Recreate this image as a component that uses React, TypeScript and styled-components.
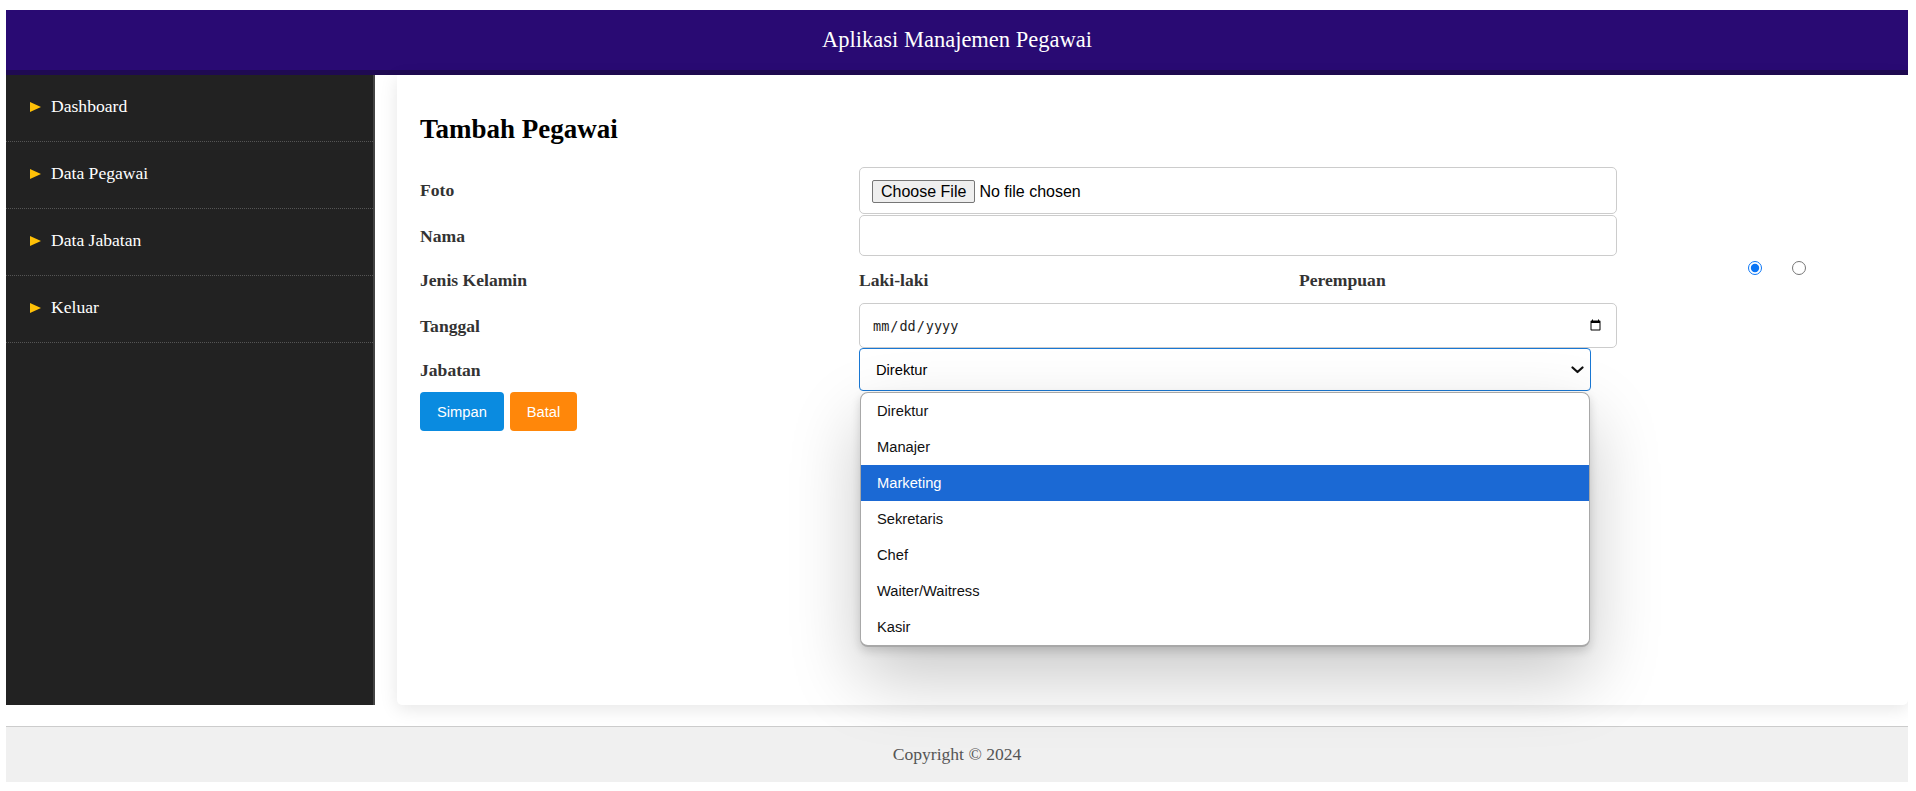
import styled, { createGlobalStyle } from "styled-components";

const serif = `"Liberation Serif", "Times New Roman", serif`;
const sans = `"Liberation Sans", Arial, sans-serif`;

const GlobalStyle = createGlobalStyle`
  body {
    margin: 10px 8px 0 6px;
    background: #fff;
    font-family: ${serif};
  }
`;

const menu = ["Dashboard", "Data Pegawai", "Data Jabatan", "Keluar"];
const jabatan = [
  "Direktur",
  "Manajer",
  "Marketing",
  "Sekretaris",
  "Chef",
  "Waiter/Waitress",
  "Kasir",
];

export default function App() {
  return (
    <>
      <GlobalStyle />
      <Header>Aplikasi Manajemen Pegawai</Header>
      <Body>
        <Sidebar>
          {menu.map((m) => (
            <NavItem key={m}>
              <svg width="11" height="10" viewBox="0 0 11 10">
                <polygon points="0,0 11,5 0,10" fill="#ffc107" />
              </svg>
              {m}
            </NavItem>
          ))}
        </Sidebar>

        <Card>
          <Title>Tambah Pegawai</Title>
          <Form>
            <Row $h={46} $mb={2}>
              <Label $shift={-1}>Foto</Label>
              <FileInput type="file" />
            </Row>
            <Row $h={41}>
              <Label>Nama</Label>
              <TextInput type="text" />
            </Row>
            <Row $h={47}>
              <Label>Jenis Kelamin</Label>
              <GenderGroup>
                <GenderLabel>Laki-laki</GenderLabel>
                <GenderLabel>Perempuan</GenderLabel>
                <RadioSet>
                  <Radio type="radio" name="jk" defaultChecked />
                  <Radio type="radio" name="jk" />
                </RadioSet>
              </GenderGroup>
            </Row>
            <Row $h={45}>
              <Label>Tanggal</Label>
              <DateInput type="date" />
            </Row>
            <Row $h={43}>
              <Label>Jabatan</Label>
              <SelectWrap>
                <Select defaultValue="Direktur">
                  {jabatan.map((j) => (
                    <option key={j}>{j}</option>
                  ))}
                </Select>
                <Chevron width="13" height="8" viewBox="0 0 13 8">
                  <path
                    d="M1.5 1.5 L6.5 6 L11.5 1.5"
                    fill="none"
                    stroke="#111"
                    strokeWidth="2.2"
                    strokeLinecap="round"
                    strokeLinejoin="round"
                  />
                </Chevron>
                <Dropdown>
                  {jabatan.map((j) => (
                    <Option key={j} $active={j === "Marketing"}>
                      {j}
                    </Option>
                  ))}
                </Dropdown>
              </SelectWrap>
            </Row>
            <Actions>
              <Button $bg="#0a8be0">Simpan</Button>
              <Button $bg="#ff870a">Batal</Button>
            </Actions>
          </Form>
        </Card>
      </Body>
      <Footer>Copyright © 2024</Footer>
    </>
  );
}

const Header = styled.header`
  height: 60px;
  background: #290a73;
  border-bottom: 5px solid #1f0a52;
  color: #fff;
  font-size: 22.5px;
  display: flex;
  align-items: center;
  justify-content: center;
`;

const Body = styled.div`
  display: flex;
  height: 630px;
`;

const Sidebar = styled.nav`
  width: 367px;
  flex: none;
  background: #222;
  border-right: 2px solid #444;
`;

const NavItem = styled.div`
  height: 67px;
  border-bottom: 1px dotted #555;
  display: flex;
  align-items: center;
  gap: 10px;
  padding-left: 24px;
  padding-bottom: 3px;
  box-sizing: border-box;
  color: #fff;
  font-size: 17.6px;
`;

const Card = styled.main`
  flex: 1;
  margin-left: 22px;
  background: #fff;
  border-radius: 0 0 5px 5px;
  box-shadow: 0 4px 18px rgba(0, 0, 0, 0.1);
  padding: 0 23px;
`;

const Title = styled.h2`
  margin: 34px 0 18px;
  height: 40px;
  line-height: 40px;
  font-size: 27px;
  font-weight: bold;
  color: #000;
`;

const Form = styled.form`
  display: flex;
  flex-direction: column;
`;

const Row = styled.div<{ $h: number; $mb?: number }>`
  display: grid;
  grid-template-columns: 439px 1fr;
  align-items: center;
  height: ${(p) => p.$h}px;
  margin-bottom: ${(p) => p.$mb ?? 0}px;
`;

const Label = styled.label<{ $shift?: number }>`
  font-size: 17.6px;
  font-weight: bold;
  color: #333;
  margin-top: ${(p) => (p.$shift ?? 2)}px;
`;

const fieldBase = `
  box-sizing: border-box;
  width: 758px;
  height: 100%;
  border: 1px solid #ccc;
  border-radius: 5px;
  background: #fff;
  font-family: ${sans};
  color: #000;
  margin: 0;
`;

const FileInput = styled.input`
  ${fieldBase}
  padding: 12px 12px 10px;
  font-size: 16px;

  &::file-selector-button {
    font: inherit;
    height: 23px;
    padding: 0 8px;
    margin-right: 4px;
    border: 1px solid #767676;
    border-radius: 2px;
    background: #efefef;
    color: #000;
  }
`;

const TextInput = styled.input`
  ${fieldBase}
  padding: 0 12px;
  font-size: 15px;
`;

const DateInput = styled.input`
  ${fieldBase}
  padding: 0 12px;
  font-family: "DejaVu Sans Mono", "Liberation Mono", monospace;
  font-size: 13.5px;
  color: #222;
`;

const GenderGroup = styled.div`
  display: flex;
  align-items: center;
  height: 100%;
`;

const GenderLabel = styled.span`
  width: 440px;
  flex: none;
  font-size: 17.6px;
  font-weight: bold;
  color: #333;
  margin-top: 2px;
`;

const RadioSet = styled.div`
  display: flex;
  gap: 30px;
  align-self: flex-start;
  margin-top: 5px;
  margin-left: 9px;
`;

const Radio = styled.input`
  width: 14px;
  height: 14px;
  margin: 0;
  accent-color: #0a75f5;
`;

const SelectWrap = styled.div`
  position: relative;
  height: 100%;
`;

const Select = styled.select`
  appearance: none;
  box-sizing: border-box;
  width: 732px;
  height: 100%;
  border: 1px solid #1a78d4;
  border-radius: 4px;
  background: #fff;
  padding: 0 36px 0 16px;
  font-family: ${sans};
  font-size: 14.7px;
  color: #000;
  outline: none;
`;

const Chevron = styled.svg`
  position: absolute;
  left: 712px;
  top: 18px;
  pointer-events: none;
`;

const Dropdown = styled.ul`
  position: absolute;
  top: calc(100% + 1px);
  left: 1px;
  width: 730px;
  box-sizing: border-box;
  margin: 0;
  padding: 0;
  list-style: none;
  background: #fff;
  border: 1px solid #a8a8a8;
  border-bottom-width: 2px;
  border-radius: 8px;
  overflow: hidden;
  box-shadow: 0 30px 70px rgba(0, 0, 0, 0.22), 0 4px 10px rgba(0, 0, 0, 0.15);
  z-index: 10;
`;

const Option = styled.li<{ $active?: boolean }>`
  height: 36px;
  display: flex;
  align-items: center;
  padding-left: 16px;
  font-family: ${sans};
  font-size: 14.7px;
  color: ${(p) => (p.$active ? "#fff" : "#111")};
  background: ${(p) => (p.$active ? "#1b69d4" : "transparent")};
`;

const Actions = styled.div`
  display: flex;
  gap: 6px;
  margin-top: 1px;
`;

const Button = styled.button<{ $bg: string }>`
  height: 39px;
  padding: 0 17px;
  border: none;
  border-radius: 4px;
  background: ${(p) => p.$bg};
  color: #fff;
  font-family: ${sans};
  font-size: 14.7px;
  cursor: pointer;
`;

const Footer = styled.footer`
  margin-top: 21px;
  height: 55px;
  background: #f0f0f0;
  border-top: 1px solid #ccc;
  display: flex;
  align-items: center;
  justify-content: center;
  color: #555;
  font-size: 17.6px;
`;
